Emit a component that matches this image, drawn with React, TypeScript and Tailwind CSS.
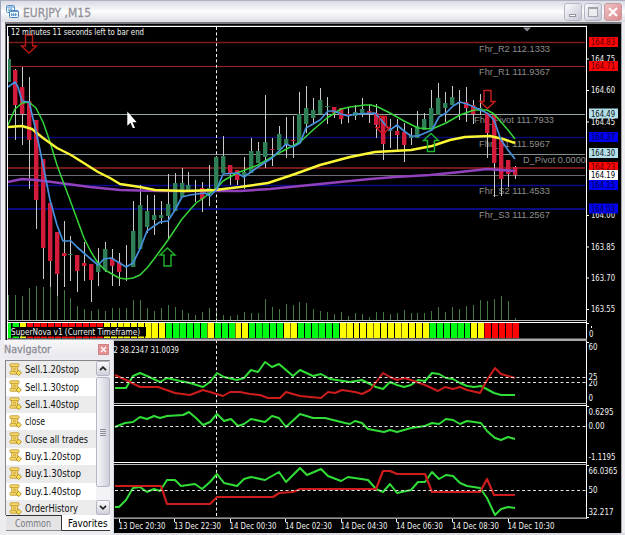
import React from "react";

type Candle = [number, number, number, number, 0 | 1];

const X0 = 8.5;
const STEP = 6.94;
const barX = (i: number) => X0 + i * STEP;

// high, low, body top, body bottom, 1 = rising
const candles: Candle[] = [
  [36, 82, 59, 82, 1], [69, 140, 70, 105, 0], [67, 145, 87, 114, 0], [77, 189, 101, 140, 0],
  [120, 229, 120, 200, 0], [159, 279, 159, 248, 0], [203, 287, 203, 261, 0], [232, 296, 232, 274, 0],
  [221, 287, 253, 256, 0], [236, 281, 254, 255, 1], [255, 292, 255, 271, 0], [242, 281, 263, 266, 0],
  [264, 302, 264, 280, 0], [248, 286, 264, 272, 1], [242, 272, 249, 270, 1], [249, 286, 258, 266, 0],
  [253, 286, 262, 272, 0], [245, 281, 266, 267, 1], [201, 267, 231, 267, 1], [185, 249, 205, 249, 1],
  [195, 233, 211, 227, 1], [195, 235, 215, 220, 1], [201, 224, 215, 218, 1], [174, 240, 204, 216, 1],
  [173, 211, 183, 211, 1], [168, 197, 183, 197, 1], [172, 191, 185, 191, 1], [180, 202, 190, 191, 1],
  [182, 212, 188, 199, 0], [165, 206, 188, 194, 1], [156, 190, 157, 190, 1], [136, 173, 156, 173, 1],
  [165, 185, 165, 173, 0], [170, 185, 170, 180, 0], [157, 189, 172, 175, 1], [138, 173, 151, 173, 1],
  [142, 163, 151, 163, 1], [95, 168, 142, 157, 1], [138, 166, 149, 150, 0], [126, 150, 134, 150, 1],
  [117, 158, 139, 145, 1], [116, 158, 140, 141, 0], [92, 143, 114, 143, 1], [86, 133, 108, 124, 1],
  [98, 123, 110, 118, 1], [88, 114, 100, 114, 1], [97, 124, 106, 107, 1], [107, 118, 107, 113, 0],
  [108, 124, 108, 119, 0], [107, 123, 114, 115, 0], [105, 120, 112, 116, 1], [98, 117, 109, 113, 1],
  [104, 123, 111, 113, 0], [104, 138, 113, 125, 0], [117, 160, 117, 144, 0], [119, 148, 130, 131, 1],
  [119, 150, 131, 135, 0], [123, 162, 132, 145, 0], [128, 145, 136, 138, 1], [111, 138, 126, 138, 1],
  [113, 130, 119, 130, 1], [90, 129, 108, 129, 1], [83, 115, 98, 115, 1], [92, 122, 103, 108, 1],
  [86, 105, 97, 105, 1], [90, 120, 102, 103, 1], [87, 122, 102, 108, 0], [100, 124, 105, 114, 0],
  [94, 115, 108, 110, 1], [113, 158, 113, 133, 0], [115, 197, 115, 163, 0], [138, 196, 138, 179, 0],
  [160, 187, 160, 174, 0], [166, 179, 167, 175, 0],
];

const volumeTops = [
  295, 295, 296, 288, 286, 287, 286, 287, 290, 298, 306, 309, 311, 309, 311, 308, 308, 308, 300, 300,
  308, 311, 308, 305, 307, 310, 313, 315, 312, 308, 309, 315, 316, 315, 312, 313, 313, 299, 307, 309,
  304, 305, 302, 303, 309, 311, 312, 314, 312, 316, 313, 314, 317, 312, 312, 314, 313, 310, 313, 313,
  313, 311, 307, 312, 307, 309, 306, 305, 300, 301, 299, 296, 301, 318,
];

const signal = "ggy" + "r".repeat(11) + "y".repeat(9) + "g".repeat(6) + "ygggyy" + "ggggg" + "yy" + "gggggg" + "y".repeat(13) + "gggggg" + "yy" + "rrrrr";
const signalColor: Record<string, string> = { g: "#00fb12", y: "#fffb00", r: "#fb0404" };
const gapColor: Record<string, string> = { g: "#046a08", y: "#777100", r: "#750404" };

const fast = "8,87 15,82 18,87 22,101 29,102 36,131 42,160 48,190 50,200 57,225 63,241 71,241 77,247 85,254 98,265 104,259 111,258 118,262 126,267 133,263 140,249 147,231 154,226 160,222 168,221 175,210 182,197 190,195 205,193 210,196 217,189 223,174 237,173 244,177 258,167 272,158 279,151 286,144 293,147 300,143 306,128 313,124 320,120 328,111 334,111 341,114 348,116 355,114 375,113 382,121 390,130 397,125 404,131 411,136 418,136 432,130 439,117 446,113 453,106 460,102 467,104 474,107 487,113 494,120 501,140 508,150 515,159";
const mid = "8,125 15,109 22,103 29,102 36,108 43,122 50,142 57,165 61,176 70,200 84,238 91,252 98,263 105,270 112,274 119,278 126,279 133,278 140,275 147,268 154,259 168,240 182,219 196,203 202,199 217,188 223,181 237,173 258,165 279,153 300,142 313,130 327,118 341,109 350,107 365,105 371,105 378,107 390,113 404,121 418,128 432,129 446,123 460,115 474,110 487,110 494,114 501,122 508,130 515,139";
const slow = "8,127 22,126 32,129 43,138 57,148 71,155 98,172 110,178 120,184 140,187 155,190 185,191 215,190 240,187 268,183 295,174 320,165 350,157 375,152 411,150 432,146 450,140 465,137 490,136 503,139 515,143";
const trend = "8,182 22,179 36,180 60,183 90,187 120,190 160,191 210,191 240,191 270,189 300,186 330,183 370,179 395,177 430,175 460,172 487,169 515,171";

const adxGreen = "115,388 126,388 133,376 140,373 147,376 160,382 167,378 180,381 190,383 203,387 210,382 217,373 224,377 237,380 244,378 251,370 258,372 265,362 272,367 279,364 293,376 300,370 313,376 321,374 330,379 350,382 362,380 376,387 383,389 390,382 397,385 404,387 411,385 418,380 425,381 432,373 439,374 446,378 453,379 460,383 467,386 474,387 481,386 494,393 501,395 515,395";
const adxRed = "115,375 126,380 140,387 158,387 175,393 190,395 203,390 210,392 223,396 230,392 240,392 250,394 260,395 268,398 280,398 286,392 300,396 321,398 328,392 335,393 342,390 355,392 362,394 370,390 383,373 390,377 397,380 404,378 411,380 425,385 438,391 445,387 453,389 460,387 467,390 480,393 487,380 495,368 501,374 508,376 515,378";
const osc = "115,427 125,423 133,422 140,417 147,419 154,416 160,418 167,416 183,415 189,412 196,418 203,425 210,422 217,414 224,421 231,419 238,426 244,424 251,419 265,422 272,416 279,418 286,427 300,414 313,418 325,418 345,423 350,424 355,421 362,423 368,429 384,432 390,430 397,432 411,428 425,426 432,423 439,424 446,419 453,420 460,424 467,421 481,423 487,431 495,438 501,440 508,437 515,439";
const rsiRed = "115,486 161,486 167,504 210,504 217,497 273,497 279,493 293,492 300,489 376,489 383,471 390,471 397,474 425,474 432,492 480,492 487,479 494,495 515,495";
const rsiGreen = "115,507 119,507 126,500 133,488 140,487 147,492 154,489 160,491 167,480 175,480 181,486 195,484 202,489 210,482 217,474 224,483 237,486 244,479 251,477 265,480 279,472 286,482 300,468 307,475 321,469 328,476 341,481 348,477 368,480 376,489 383,492 390,484 397,493 411,490 418,482 425,482 432,472 439,479 446,475 453,476 460,483 467,486 480,488 487,498 495,515 501,509 508,507 515,508";

const levels: [number, string, number][] = [
  [42.5, "#7c1d1d", 1.6], [66.5, "#a52222", 1.2], [114.5, "#96a8aa", 1.2], [137.5, "#080a72", 1.6],
  [154.5, "#829094", 1.2], [168, "#701c1a", 2], [175.5, "#6b6b70", 1], [185.5, "#090b88", 1.4], [209, "#090b80", 2],
];

const levelTexts: [number, number, string, number][] = [
  [479, 51.5, "Fhr_R2 112.1333", 71], [479, 75, "Fhr_R1 111.9367", 71], [474, 122.5, "Fhr_Pivot 111.7933", 80],
  [479, 146.5, "Fhr_S1 111.5967", 71], [523, 162.5, "D_Pivot 0.0000", 63], [479, 194, "Fhr_S2 111.4533", 71],
  [479, 217.5, "Fhr_S3 111.2567", 71],
];

const scale: [number, string][] = [
  [58.5, "164.75"], [90, "164.60"], [121.5, "164.45"], [215, "164.00"], [246.5, "163.85"], [277.5, "163.70"], [309, "163.55"],
];
const tags: [number, string, string, string][] = [
  [42, "164.83", "#fb0606", "#5c0000"], [66, "164.71", "#fb0606", "#5c0000"], [113.5, "164.49", "#b2dfe9", "#111"],
  [137, "164.37", "#0202f2", "#00004a"], [153, "164.30", "#b2dfe9", "#111"], [167, "164.23", "#fb0606", "#5c0000"],
  [185, "164.15", "#0202f2", "#00004a"], [175, "164.19", "#ffffff", "#000"], [208.5, "164.03", "#0202f2", "#00004a"],
];
const lowerScale: [number, string, number][] = [
  [347, "60", 9], [382.5, "20", 9], [377, "25", 9], [397.5, "0", 4.5], [411.5, "0.6295", 25], [426, "0.00", 16],
  [457, "-1.1195", 27], [470.5, "66.0365", 29], [490, "50", 9], [512, "32.217", 25],
];
const times: [number, string][] = [
  [118.5, "13 Dec 20:30"], [174, "13 Dec 22:30"], [229.5, "14 Dec 00:30"], [285, "14 Dec 02:30"],
  [340.5, "14 Dec 04:30"], [396, "14 Dec 06:30"], [452, "14 Dec 08:30"], [507.5, "14 Dec 10:30"],
];

function T({ x, y, w, children, fill = "#f2f2f2", size = 9 }: { x: number; y: number; w: number; children: string; fill?: string; size?: number }) {
  return (
    <text x={x} y={y} textLength={w} lengthAdjust="spacingAndGlyphs" fontSize={size} fill={fill} fontFamily="'DejaVu Sans Condensed','DejaVu Sans',sans-serif">
      {children}
    </text>
  );
}

function Line({ points, color, width }: { points: string; color: string; width: number }) {
  return <polyline points={points} fill="none" stroke={color} strokeWidth={width} strokeLinejoin="round" />;
}

function Arrow({ x, y, up = false, color }: { x: number; y: number; up?: boolean; color: string }) {
  return (
    <path
      d="M-3.5 0.5H3.5V11.5H7.5L0 18.5L-7.5 11.5H-3.5Z"
      transform={up ? `translate(${x} ${y + 19}) scale(1 -1)` : `translate(${x} ${y})`}
      fill="none" stroke={color} strokeWidth="1.4"
    />
  );
}

function Chart() {
  return (
    <svg width="617" height="511" viewBox="5 22 617 511" className="block shrink-0">
      <rect x="5" y="22" width="616" height="511" fill="#000" />
      <rect x="5" y="22" width="616" height="2" fill="#77777b" />
      <rect x="5" y="22" width="1" height="511" fill="#6f6f74" />
      <rect x="621" y="22" width="1" height="511" fill="#a8a8ab" />
      {levels.map(([y, c, w]) => <line key={y} x1="8" x2="585" y1={y} y2={y} stroke={c} strokeWidth={w} />)}
      {volumeTops.map((y, i) => <rect key={i} x={Math.round(barX(i) - 0.5)} y={y} width="1" height={320 - y} fill="#467846" />)}
      {levelTexts.map(([x, y, t, w]) => (
        <text key={t} x={x} y={y} textLength={w} lengthAdjust="spacingAndGlyphs" fontSize="9" fill="#8d8d8d" fontFamily="'Liberation Sans',Arial,sans-serif">{t}</text>
      ))}
      <line x1="216.5" x2="216.5" y1="27" y2="518" stroke="#f4f4f4" strokeDasharray="3 2.4" />
      {candles.map(([h, l, t, b, up], i) => {
        const x = Math.round(barX(i) - 0.5);
        return (
          <g key={i}>
            <rect x={x} y={h} width="1" height={l - h} fill="#c9c9c9" />
            <rect x={i === 0 ? x : x - 2} y={t} width={i === 0 ? 3 : 4.4} height={b - t} fill={up ? "#2f8057" : "#d31b3b"} />
          </g>
        );
      })}
      <Line points={trend} color="#9241bd" width={2.6} />
      <Line points={mid} color="#35d538" width={1.5} />
      <Line points={slow} color="#fbf735" width={2.4} />
      <Line points={fast} color="#4590dc" width={1.7} />
      <Arrow x={29} y={34.5} color="#ba1717" />
      <Arrow x={487.5} y={90} color="#ca1e1e" />
      <path d="M379.5 116.5H386.5V127.5H390L383 134L376 127.5H379.5Z" fill="none" stroke="#d91522" strokeWidth="1.3" />
      <Arrow x={167.5} y={247.5} up color="#20b52e" />
      <Arrow x={431} y={133} up color="#20b52e" />
      <path d="M523 27.5H531L527 31.5Z" fill="#8a8d98" />
      <T x={11} y={35} w={133}>12 minutes 11 seconds left to bar end</T>
      <path d="M127.3 111.5V125.8L130.5 122.8L132.8 128H135L132.6 122.2H136.7Z" fill="#fff" />

      {signal.split("").map((s, i) => {
        const x = Math.round(barX(i) - 3);
        return (
          <g key={i}>
            <rect x={x} y="323" width="7" height="15" fill={i % 4 === 1 ? gapColor[s] : "#000"} />
            <rect x={i === 0 ? 8 : x + 1} y="323" width={i === 0 ? 3 : 6} height="15" fill={signalColor[s]} />
          </g>
        );
      })}
      <rect x="11" y="327" width="135" height="9.5" fill="#000" />
      <T x={11} y={335} w={129} size={9}>SuperNova v1 (Current Timeframe)</T>

      <rect x="7" y="25.8" width="580" height="1.2" fill="#fff" />
      <rect x="7" y="26" width="1" height="493" fill="#fff" />
      <rect x="586" y="26" width="1" height="493" fill="#fff" />
      <rect x="7" y="320" width="580" height="1" fill="#bbb" />
      <rect x="7" y="322" width="580" height="1" fill="#fff" />
      <rect x="7" y="338.5" width="580" height="2.5" fill="#aaa" />
      {[403, 405, 462, 464].map((y) => <rect key={y} x="7" y={y} width="580" height="1" fill={y === 405 || y === 462 ? "#fff" : "#bababa"} />)}
      <rect x="7" y="517.5" width="580" height="1.3" fill="#b9b9b9" />
      <T x={113.5} y={353} w={65.5}>2 38.2347 31.0039</T>
      <Line points={adxGreen} color="#31de38" width={2} />
      <Line points={adxRed} color="#cd1c1c" width={2} />
      <Line points={osc} color="#31de38" width={2} />
      <Line points={rsiGreen} color="#31de38" width={2} />
      <Line points={rsiRed} color="#cd1c1c" width={2.2} />
      {[377.5, 382.5, 426.5, 490.5].map((y) => <line key={y} x1="115" x2="586" y1={y} y2={y} stroke="#dedede" strokeDasharray="3 2.5" />)}

      {scale.map(([y, t]) => (
        <g key={t}>
          <rect x="587" y={y} width="2" height="1" fill="#fff" />
          <T x={591} y={y + 3.2} w={24}>{t}</T>
        </g>
      ))}
      {tags.map(([y, t, bg, fg]) => (
        <g key={t}>
          <rect x="589" y={y - 5} width="29" height={10} fill={bg} />
          <T x={591} y={y + 3.2} w={24} fill={fg}>{t}</T>
        </g>
      ))}
      <T x={589} y={336.5} w={4.5}>0</T>
      <rect x="591" y="326" width="1" height="2" fill="#fff" />
      {lowerScale.map(([y, t, w]) => (
        <g key={t}>
          {t === "25" && <rect x="588" y="373" width="10" height="7.5" fill="#000" />}
          <T x={588.5} y={y + 3} w={w}>{t}</T>
        </g>
      ))}
      {[323, 342, 406, 465, 517].map((y) => <rect key={y} x="587" y={y} width="2" height="1" fill="#fff" />)}
      {times.map(([x, t]) => (
        <g key={t}>
          <rect x={Math.round(x)} y="519" width="1" height="3" fill="#fff" />
          <T x={x} y={529} w={47}>{t}</T>
        </g>
      ))}
    </svg>
  );
}

function ChartIcon() {
  return (
    <svg width="13" height="14" viewBox="0 0 13 14" className="shrink-0">
      <rect x="0.5" y="0.5" width="8" height="7" rx="1" fill="#e6f3fd" stroke="#5c93c9" />
      <path d="M1 2H8M3 3.5V6M5 3V5.5" stroke="#5c93c9" strokeWidth="1.1" />
      <rect x="3.5" y="5.5" width="9" height="7" rx="1" fill="#eff8ff" stroke="#4583bd" />
      <path d="M4 6.5H12M5.5 11V8.5L7.5 11V8.5L9.5 11V8.5L11 10.5" fill="none" stroke="#4583bd" strokeWidth="0.8" />
    </svg>
  );
}

function ScriptIcon() {
  return (
    <svg width="13" height="14" viewBox="0 0 13 14" className="shrink-0">
      <path d="M1.5 0.8H9.5Q11 2.2 9.5 3.6H8.7V8.2H9.5V11.2H1.5Q0 9.8 1.5 8.3H2.7V3.6H1.5Q0 2.2 1.5 0.8Z" fill="#f6dc70" stroke="#c79a30" strokeWidth="0.9" />
      <path d="M1.5 3.5H9M4.2 5.2H7.2M4.2 6.9H7.2M2.7 8.6H7" stroke="#bd9128" strokeWidth="0.7" />
      <path d="M9.7 7.2L12.4 9.9L9.7 12.6L7 9.9Z" fill="#f9e25a" stroke="#ad8118" strokeWidth="0.9" />
    </svg>
  );
}

const scripts: [string, number][] = [
  ["Sell.1.20stop", 54], ["Sell.1.30stop", 54], ["Sell.1.40stop", 54], ["close", 20], ["Close all trades", 63],
  ["Buy.1.20stop", 56], ["Buy.1.30stop", 56], ["Buy.1.40stop", 56], ["OrderHistory", 53],
];

function ScrollButton({ down = false }: { down?: boolean }) {
  return (
    <div className="flex h-[15px] w-[14px] shrink-0 items-center justify-center rounded-[2px] border border-[#b5b6c4] bg-linear-to-b from-[#fafafc] to-[#cfd0db]">
      <svg width="8" height="5" viewBox="0 0 8 5">
        <path d={down ? "M1 0.8L4 3.8L7 0.8" : "M1 4.2L4 1.2L7 4.2"} fill="none" stroke="#222" strokeWidth="1.7" />
      </svg>
    </div>
  );
}

function Label({ text, width, color, height = 17, bold = false }: { text: string; width: number; color: string; height?: number; bold?: boolean }) {
  return (
    <svg width={width + 1} height={height} className="block shrink-0 overflow-visible">
      <text x="0" y={height / 2 + 3.8} textLength={width} lengthAdjust="spacingAndGlyphs" fontSize="10.5" fill={color} stroke={color} strokeWidth={bold ? 0.3 : 0} fontFamily="'DejaVu Sans Condensed','DejaVu Sans',sans-serif">{text}</text>
    </svg>
  );
}

function Navigator() {
  return (
    <aside className="absolute top-[340px] left-0 flex h-[195px] w-[114px] flex-col border-r border-[#d7d7df] bg-[#ececf1] pr-[3px] pl-[4px]">
      <header className="flex h-[18px] shrink-0 items-center justify-between bg-linear-to-b from-[#f8f8fb] to-[#e7e7ed] pr-px">
        <Label text="Navigator" width={47} color="#8f8f96" bold />
        <div className="flex h-[11px] w-[11px] items-center justify-center border border-[#cc8589] bg-[#e78d8e]">
          <svg width="7" height="7" viewBox="0 0 7 7"><path d="M1 1L6 6M6 1L1 6" stroke="#fff" strokeWidth="1.4" /></svg>
        </div>
      </header>
      <div className="mt-[2px] ml-px flex h-[155px] shrink-0 overflow-hidden border-t border-l border-[#85858b] bg-white">
        <ul className="w-[90px] shrink-0">
          {scripts.map(([t, w], i) => (
            <li key={t} className={`flex h-[17.36px] items-center gap-[3px] pl-[3px] ${i % 2 ? "bg-white" : "bg-[#ebebeb]"}`}>
              <ScriptIcon />
              <Label text={t} width={w} color="#111" height={15} />
            </li>
          ))}
        </ul>
        <div className="flex w-[14px] shrink-0 flex-col bg-[#f2f2f7]">
          <ScrollButton />
          <div className="mt-px flex h-[110px] flex-col items-center justify-center gap-px rounded-[2px] border border-[#b5b6c4] bg-linear-to-r from-[#f7f7fa] to-[#cecfdb]">
            {[0, 1, 2, 3].map((k) => <div key={k} className="h-px w-[6px] bg-[#8e8f9b]" />)}
          </div>
          <div className="flex-1" />
          <ScrollButton down />
        </div>
      </div>
      <footer className="ml-[2px] flex h-[16px] shrink-0">
        <div className="flex h-[16px] w-[56px] items-center justify-center border-t border-r border-b border-[#333] border-b-[#8c8c90] bg-[#e4e4e6]">
          <Label text="Common" width={36} color="#77777c" height={14} />
        </div>
        <div className="flex h-[16px] flex-1 items-center border-b border-[#333] bg-white pl-[6px]">
          <Label text="Favorites" width={39.5} color="#000" height={14} />
        </div>
      </footer>
    </aside>
  );
}

export default function App() {
  return (
    <main className="relative flex h-[535px] w-[625px] flex-col overflow-hidden bg-[#dcdce2]">
      <header className="flex h-[22px] shrink-0 items-center border-t border-l border-t-[#aeb1c2] border-l-[#9ea3b8] bg-linear-to-b from-[#d9dae4] via-[#fdfdfe] to-[#dcdde4] pr-[3px] pl-[5px]">
        <ChartIcon />
        <svg width="90" height="20" className="ml-[4px] shrink-0">
          <text x="0" y="14.5" textLength="68" lengthAdjust="spacingAndGlyphs" fontSize="11.5" stroke="#929298" strokeWidth="0.3" fill="#929298" fontFamily="'DejaVu Sans Condensed','DejaVu Sans',sans-serif">EURJPY ,M15</text>
        </svg>
        <div className="ml-auto flex gap-[2px]">
          <div className="flex h-[18px] w-[18px] items-end rounded-[3px] border border-[#b4b6c6] bg-linear-to-br from-[#fafafc] to-[#c5c7d4] pb-[3px] pl-[4px]"><div className="h-[3px] w-[7px] border border-[#92949f] bg-white" /></div>
          <div className="flex h-[18px] w-[18px] items-center justify-center rounded-[3px] border border-[#b4b6c6] bg-linear-to-br from-[#fafafc] to-[#c5c7d4]"><div className="h-[10px] w-[10px] border border-t-2 border-[#a0a2ad] bg-[#eee]" /></div>
          <div className="flex h-[18px] w-[18px] items-center justify-center rounded-[3px] border border-[#c5999f] bg-linear-to-br from-[#efc1c2] to-[#d9888c]">
            <svg width="12" height="12" viewBox="0 0 12 12"><path d="M2 2L10 10M10 2L2 10" stroke="#fff" strokeWidth="2.2" /></svg>
          </div>
        </div>
      </header>
      <div className="flex h-[511px] shrink-0 border-l border-[#9ea3b8] bg-[#ededf2] pl-[4px]">
        <Chart />
      </div>
      <Navigator />
    </main>
  );
}
